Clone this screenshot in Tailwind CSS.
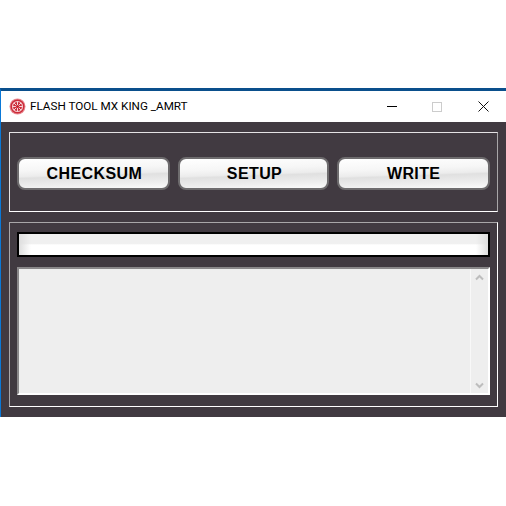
<!DOCTYPE html>
<html lang="en">
<head>
    <meta charset="UTF-8">
    <title>FLASH TOOL MX KING _AMRT</title>
    <script src="https://cdn.jsdelivr.net/npm/@tailwindcss/browser@4"></script>
</head>
<body class="bg-white w-[506px] h-[506px] overflow-hidden font-['Liberation_Sans',sans-serif]">
    <div class="pt-[88px]">
        <div class="h-[329px] flex flex-col border-t-[3px] border-t-[#0a4f8c] border-l border-l-[#0a78d7]">
            <!-- Title bar -->
            <div class="h-[31px] flex items-center bg-white">
                <svg class="ml-[8px] w-[17px] h-[17px]" viewBox="0 0 17 17">
                    <circle cx="8.5" cy="8.5" r="8" fill="#e88a92"/>
                    <circle cx="8.5" cy="8.5" r="7" fill="#cc2c3a"/>
                    <circle cx="8.5" cy="8.5" r="5" fill="none" stroke="#f5c8cc" stroke-width="1.1"/>
                    <path d="M8.5 3.5v10M3.5 8.5h10M5 5l7 7M12 5l-7 7" stroke="#f5d5d8" stroke-width="1"/>
                    <circle cx="8.5" cy="8.5" r="1.6" fill="#c81e2c"/>
                </svg>
                <span class="ml-[4px] font-['Roboto',sans-serif] text-[11.7px] text-black whitespace-nowrap">FLASH TOOL MX KING _AMRT</span>
                <div class="ml-auto flex items-center">
                    <div class="w-[46px] h-[31px] flex items-center justify-center">
                        <div class="ml-[2px] w-[10px] h-px bg-black"></div>
                    </div>
                    <div class="w-[46px] h-[31px] flex items-center justify-center">
                        <div class="w-[10px] h-[10px] border border-[#cccccc]"></div>
                    </div>
                    <div class="w-[46px] h-[31px] flex items-center justify-center">
                        <svg class="w-[11px] h-[11px]" viewBox="0 0 11 11"><path d="M.5.5l10 10M10.5.5l-10 10" stroke="#111" stroke-width="1" fill="none"/></svg>
                    </div>
                </div>
            </div>

            <!-- Body -->
            <div class="flex-1 bg-[#413a41] pt-[10px] pl-[8px] pr-[8px] flex flex-col gap-[10px]">
                <div class="h-[80px] border border-[#e4e2e4] border-b-white border-r-[#a8a6a8] flex items-center gap-[8px] pl-[7px] pr-[7px] pt-[2px]">
                    <button class="w-[153px] h-[33px] pt-px pl-[2px] rounded-[8px] border-2 border-[#6e6c6e] bg-[linear-gradient(178deg,#ffffff_0%,#f6f6f6_35%,#ececec_52%,#e0e0e0_57%,#eeeeee_82%,#fbfbfb_100%)] font-bold text-[16px] tracking-[0.4px] text-black">CHECKSUM</button>
                    <button class="w-[152px] h-[33px] pt-px pl-[2px] rounded-[8px] border-2 border-[#6e6c6e] bg-[linear-gradient(178deg,#ffffff_0%,#f6f6f6_35%,#ececec_52%,#e0e0e0_57%,#eeeeee_82%,#fbfbfb_100%)] font-bold text-[16px] tracking-[0.4px] text-black">SETUP</button>
                    <button class="w-[153px] h-[33px] pt-px rounded-[8px] border-2 border-[#6e6c6e] bg-[linear-gradient(178deg,#ffffff_0%,#f6f6f6_35%,#ececec_52%,#e0e0e0_57%,#eeeeee_82%,#fbfbfb_100%)] font-bold text-[16px] tracking-[0.4px] text-black">WRITE</button>
                </div>
                <div class="h-[185px] border border-[#a8a6a8] border-r-white border-b-white pt-[9px] px-[7px] flex flex-col gap-[10px]">
                    <!-- Progress bar -->
                    <div class="h-[25px] border-2 border-black bg-[linear-gradient(90deg,#dedede,transparent_12px,transparent_calc(100%-12px),#dedede),linear-gradient(180deg,#f0f0f0_45%,#ffffff_52%)]"></div>
                    <!-- Log box -->
                    <div class="h-[128px] flex border-2 border-[#8a888a] border-r-white border-b-white bg-[#eeeeee]">
                        <div class="flex-1"></div>
                        <div class="w-[18px] border-l border-[#f8f8f8] flex flex-col items-center justify-between pt-[5px] pb-[4px] pr-[1px]">
                            <svg class="w-[9px] h-[7px]" viewBox="0 0 9 7"><path d="M1 5.5l3.5-3.5 3.5 3.5" fill="none" stroke="#bdbdbd" stroke-width="2"/></svg>
                            <svg class="w-[9px] h-[7px]" viewBox="0 0 9 7"><path d="M1 1.5l3.5 3.5 3.5-3.5" fill="none" stroke="#bdbdbd" stroke-width="2"/></svg>
                        </div>
                    </div>
                </div>
            </div>
        </div>
    </div>
</body>
</html>
